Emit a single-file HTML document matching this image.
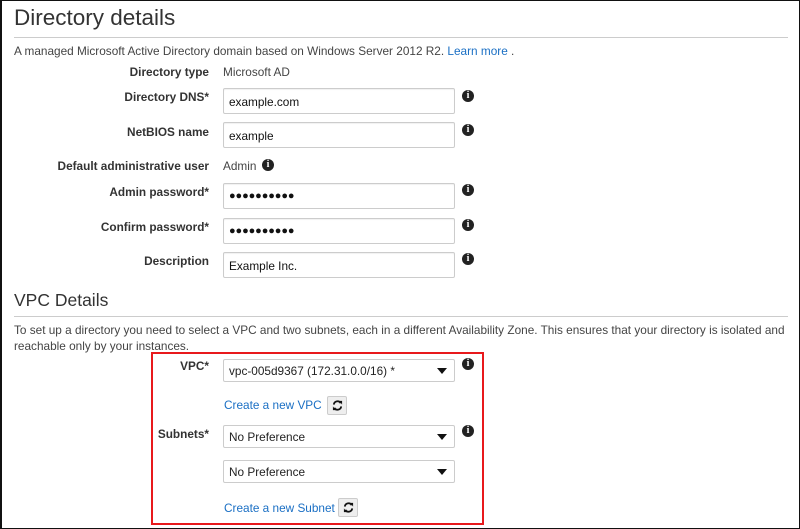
<!DOCTYPE html>
<html><head><style>
*{margin:0;padding:0;box-sizing:border-box}
body{width:800px;height:529px;background:#fff;position:relative;overflow:hidden;font-family:"Liberation Sans",Arial,sans-serif;color:#333}
.frame{position:absolute;left:0;top:0;width:800px;height:529px;border:1px solid #111;border-left-width:2px}
.a{position:absolute;white-space:nowrap}
.lab{position:absolute;right:591px;font-size:11.8px;font-weight:bold;color:#333;white-space:nowrap}
.inp{position:absolute;left:223px;width:232px;height:26px;border:1px solid #ccc;border-radius:2px;font-size:11.8px;color:#111;padding:6px 5px;box-shadow:inset 0 1px 1px rgba(0,0,0,.06)}
.sel{position:absolute;left:223px;width:232px;height:23px;border:1px solid #ccc;border-radius:2px;font-size:11.8px;color:#222;padding:4px 5px;background:#fff}
.sel:after{content:"";position:absolute;right:7px;top:8px;border-left:5px solid transparent;border-right:5px solid transparent;border-top:6px solid #111}
.i{position:absolute;width:12px;height:12px;border-radius:50%;background:#222;color:#fff;font:bold 10px/12px "Liberation Serif",serif;text-align:center}
.line{position:absolute;left:14px;width:774px;height:1px;background:#ccc}
.dots{font-size:11px;letter-spacing:-0.1px;padding-top:6px}
.lnk{position:absolute;color:#1a6fc4;font-size:11.8px}
.btn{position:absolute;width:20px;height:19px;border:1px solid #ccc;background:#eee;border-radius:2px;text-align:center}
.btn svg{margin-top:3px}
.t{font-size:11.8px}
</style></head><body>
<div class="a" style="left:14px;top:5px;font-size:22.5px;color:#333">Directory details</div>
<div class="line" style="top:37px"></div>
<div class="a t" style="left:14px;top:44px;color:#444">A managed Microsoft Active Directory domain based on Windows Server 2012 R2. <span style="color:#1a6fc4">Learn more</span> .</div>

<div class="lab" style="top:65px">Directory type</div>
<div class="a t" style="left:223px;top:65px;color:#444">Microsoft AD</div>

<div class="lab" style="top:90px">Directory DNS*</div>
<div class="inp" style="top:88px">example.com</div>
<div class="i" style="left:462px;top:90px">i</div>

<div class="lab" style="top:125px">NetBIOS name</div>
<div class="inp" style="top:122px">example</div>
<div class="i" style="left:462px;top:124px">i</div>

<div class="lab" style="top:159px">Default administrative user</div>
<div class="a t" style="left:223px;top:159px;color:#444">Admin</div>
<div class="i" style="left:262px;top:159px">i</div>

<div class="lab" style="top:185px">Admin password*</div>
<div class="inp dots" style="top:183px">●●●●●●●●●●</div>
<div class="i" style="left:462px;top:184px">i</div>

<div class="lab" style="top:220px">Confirm password*</div>
<div class="inp dots" style="top:218px">●●●●●●●●●●</div>
<div class="i" style="left:462px;top:219px">i</div>

<div class="lab" style="top:254px">Description</div>
<div class="inp" style="top:252px">Example Inc.</div>
<div class="i" style="left:462px;top:253px">i</div>

<div class="a" style="left:14px;top:290px;font-size:17.5px;color:#333">VPC Details</div>
<div class="line" style="top:316px"></div>
<div class="a t" style="left:14px;top:323px;color:#444">To set up a directory you need to select a VPC and two subnets, each in a different Availability Zone. This ensures that your directory is isolated and</div>
<div class="a t" style="left:14px;top:339px;color:#444">reachable only by your instances.</div>

<div style="position:absolute;left:151px;top:352px;width:333px;height:173px;border:2px solid #e8191c"></div>
<div class="lab" style="top:359px">VPC*</div>
<div class="sel" style="top:359px">vpc-005d9367 (172.31.0.0/16) *</div>
<div class="i" style="left:462px;top:358px">i</div>
<div class="lnk" style="left:224px;top:398px">Create a new VPC</div>
<div class="btn" style="left:327px;top:396px"><svg width="11" height="11" viewBox="0 0 12 12"><path d="M2 5A4 4 0 0 1 9.5 3.5M10 7A4 4 0 0 1 2.5 8.5" fill="none" stroke="#111" stroke-width="2"/><path d="M8 1L11 1L11 5Z M4 11L1 11L1 7Z" fill="#111"/></svg></div>

<div class="lab" style="top:427px">Subnets*</div>
<div class="sel" style="top:425px">No Preference</div>
<div class="i" style="left:462px;top:425px">i</div>
<div class="sel" style="top:460px">No Preference</div>
<div class="lnk" style="left:224px;top:501px">Create a new Subnet</div>
<div class="btn" style="left:338px;top:498px"><svg width="11" height="11" viewBox="0 0 12 12"><path d="M2 5A4 4 0 0 1 9.5 3.5M10 7A4 4 0 0 1 2.5 8.5" fill="none" stroke="#111" stroke-width="2"/><path d="M8 1L11 1L11 5Z M4 11L1 11L1 7Z" fill="#111"/></svg></div>
<div class="frame"></div>
</body></html>
